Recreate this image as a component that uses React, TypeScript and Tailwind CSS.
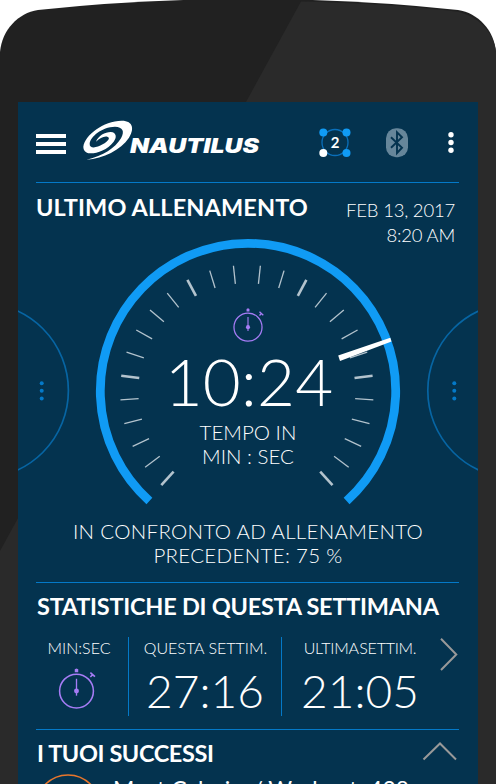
const tickAngles = Array.from({ length: 13 }, (_, i) => 6.1 + i * 10.95);

function Stopwatch({ size }: { size: number }) {
  return (
    <svg width={size} height={size} viewBox="0 0 40 40" className="block" fill="none" stroke="#a67cf5">
      <circle cx="20" cy="22.5" r="16.5" strokeWidth="1.5" />
      <path d="M20 10.5V27" strokeWidth="1.3" />
      <circle cx="20" cy="22.5" r="2.4" fill="#a67cf5" stroke="none" />
      <path d="M18.3 1.2l1.7-.8 1.7.8v2.9h-3.400z" fill="#a67cf5" stroke="none" />
      <path d="M33.500 4.500l4.500 4M35.800 6.500l-2.300 2.300" strokeWidth="1.600" />
    </svg>
  );
}

function Logo() {
  return (
    <svg width="180" height="42" viewBox="82 119 180 42" className="block" fill="#fff">
      <path
        transform="translate(20 105) scale(.33333)"
        d="M190 125C195 90 250 48 305 47C342 47 342 75 327 98C302 135 250 160 200 164C250 152 285 130 303 100C315 78 308 66 285 65C245 66 211 95 209 116C208 132 230 129 248 118C265 108 272 98 262 95C250 93 240 100 228 110C235 92 255 81 272 81C290 82 291 98 281 110C262 135 230 146 210 145C196 144 190 135 190 125Z"
      />
      <text x="130" y="153.300" fontFamily="Inter, sans-serif" fontWeight="900" fontStyle="italic" fontSize="19.8" textLength="129" lengthAdjust="spacingAndGlyphs">
        NAUTILUS
      </text>
    </svg>
  );
}

function HeaderIcons() {
  return (
    <svg width="144" height="34" viewBox="316 126 144 34" className="block">
      <circle cx="335" cy="142.500" r="13" fill="none" stroke="#0a6fba" strokeWidth="1.300" />
      <g fill="#109bf5">
        <circle cx="323.300" cy="132.500" r="4" />
        <circle cx="346.500" cy="132.500" r="4" />
        <circle cx="346.500" cy="153" r="4" />
      </g>
      <circle cx="323.300" cy="153" r="4" fill="#fff" />
      <text x="335" y="148" textAnchor="middle" fontFamily="Lato, sans-serif" fontWeight="700" fontSize="15" fill="#fff">2</text>
      <rect x="386" y="128.300" width="22" height="29" rx="10" fill="#66869a" />
      <path d="M391 137.300L402 147.700L397 153V132.300L402 137.300L391 147.700" fill="none" stroke="#04334f" strokeWidth="1.900" />
      <g fill="#fff">
        <circle cx="451" cy="134.800" r="2.700" />
        <circle cx="451" cy="142.500" r="2.700" />
        <circle cx="451" cy="150.200" r="2.700" />
      </g>
    </svg>
  );
}

function Gauge() {
  return (
    <svg width="460" height="399" viewBox="18 183 460 399" className="block">
      <g fill="none" stroke="#0765a3" strokeWidth="1.700">
        <circle cx="-19.300" cy="390.500" r="87.700" />
        <circle cx="515.500" cy="390.500" r="87.700" />
      </g>
      <g fill="#0479c8">
        {[383.3, 390.8, 398.5].map((y) => (
          <g key={y}>
            <circle cx="41.700" cy={y} r="2" />
            <circle cx="454.300" cy={y} r="2" />
          </g>
        ))}
      </g>
      <path d="M149.400 501A147.700 147.700 0 1 1 346.600 501" fill="none" stroke="#109bf5" strokeWidth="8.800" />
      <g stroke="#b3c3cd">
        {tickAngles.map((a, i) => (
          <g key={a} strokeWidth={i % 5 === 2 ? 2.6 : 1.3}>
            <path d="M0 -126.700V-108.500" transform={`translate(246.900 391.700) rotate(${a})`} />
            <path d="M0 -126.700V-108.500" transform={`translate(246.900 391.700) rotate(${-a})`} />
          </g>
        ))}
      </g>
      <path d="M338.200 355.500L390.300 337.800L391.500 341.600L340 361Z" fill="#fff" />
    </svg>
  );
}

export default function App() {
  return (
    <div className="grid h-[784px] w-[496px] overflow-hidden bg-white font-['Lato',sans-serif] text-white">
      <svg width="496" height="784" className="block [grid-area:1/1]">
        <path d="M0 784V52C2 30 18 13 38 10Q140 -1 248 -1T458 10C478 13 494 30 496 52V784Z" fill="#212121" />
        <path d="M301 1.500Q390 3.500 456 11.500C477 15 494 32 496 52V784H0V551Z" fill="#2a2a2a" />
      </svg>
      <main className="mx-[18px] mt-[102px] h-[682px] overflow-hidden bg-[#04334f] [grid-area:1/1]">
        <header className="flex h-20 items-center pl-[18px]">
          <div className="mt-1 flex w-[30px] flex-col gap-1">
            <div className="h-1 bg-white" />
            <div className="h-1 bg-white" />
            <div className="h-1 bg-white" />
          </div>
          <div className="mt-[-4px] ml-4">
            <Logo />
          </div>
          <div className="ml-[54px] mt-[2px]">
            <HeaderIcons />
          </div>
        </header>
        <div className="mx-[18px] h-px w-[423px] bg-[#0479c8]" />

        <section className="grid h-[399px]">
          <div className="[grid-area:1/1]">
            <Gauge />
          </div>
          <div className="flex justify-between pt-3 pr-[23px] pl-[18px] [grid-area:1/1]">
            <h2 className="text-[23.5px] leading-6 font-bold tracking-[0.12px] whitespace-nowrap">ULTIMO ALLENAMENTO</h2>
            <p className="pt-[3px] text-right text-[18.500px] leading-[25px] font-light tracking-[-0.2px] whitespace-nowrap">
              FEB 13, 2017
              <br />
              8:20 AM
            </p>
          </div>
          <div className="flex flex-col items-center pt-[125px] text-center text-[20.5px] leading-6 font-light whitespace-nowrap [grid-area:1/1]">
            <Stopwatch size={34} />
            <div className="mt-[7px] ml-[2px] text-[65.5px] leading-[64px] tracking-[0.2px]">10:24</div>
            <p className="mt-[7px]">
              TEMPO IN
              <br />
              MIN : SEC
            </p>
            <p className="mt-[51px] tracking-[0.32px]">
              IN CONFRONTO AD ALLENAMENTO
              <br />
              PRECEDENTE: 75 %
            </p>
          </div>
        </section>
        <div className="mx-[18px] h-px w-[423px] bg-[#0479c8]" />

        <section className="h-[146px] pt-[11px] pl-[18px]">
          <h2 className="ml-px text-[23.5px] leading-6 font-bold tracking-[-0.25px] whitespace-nowrap">STATISTICHE DI QUESTA SETTIMANA</h2>
          <div className="mt-[19px] flex h-[79px] text-center text-base leading-6 font-light whitespace-nowrap">
            <div className="flex w-[92px] flex-col items-center">
              <div className="mt-[-1px] mr-[6px]">MIN:SEC</div>
              <div className="mt-[8px] mr-3">
                <Stopwatch size={41} />
              </div>
            </div>
            <div className="w-[153px] border-l border-[#0479c8]">
              <div className="mt-[-1px] ml-px">QUESTA SETTIM.</div>
              <div className="mt-[7px] text-[46px] leading-[48px]">27:16</div>
            </div>
            <div className="w-[157px] border-l border-[#0479c8]">
              <div className="mt-[-1px] tracking-[-0.25px] [word-spacing:-3px]">ULTIMA SETTIM.</div>
              <div className="mt-[7px] text-[46px] leading-[48px]">21:05</div>
            </div>
            <svg width="20" height="36" className="block" fill="none" stroke="#999" strokeWidth="2">
              <path d="M3 1.700L18.300 17.500L3 33" />
            </svg>
          </div>
        </section>
        <div className="mx-[18px] h-px w-[423px] bg-[#0479c8]" />

        <section className="pt-[11px] pl-[19px]">
          <div className="flex justify-between pr-5">
            <h2 className="text-[23.5px] leading-6 font-bold tracking-[-0.4px] whitespace-nowrap">I TUOI SUCCESSI</h2>
            <svg width="36" height="20" className="mt-px block" fill="none" stroke="#999" strokeWidth="2">
              <path d="M1.500 17.500L18 1.500L34 17.500" />
            </svg>
          </div>
          <div className="flex">
            <svg width="66" height="66" className="mt-[9px] ml-[-2px] block shrink-0">
              <circle cx="33" cy="33" r="32" fill="none" stroke="#e8762c" strokeWidth="1.500" />
            </svg>
            <p className="mt-[10px] ml-[12px] text-[23px] leading-7 whitespace-nowrap">Most Calories/ Workout: 428</p>
          </div>
        </section>
      </main>
    </div>
  );
}
